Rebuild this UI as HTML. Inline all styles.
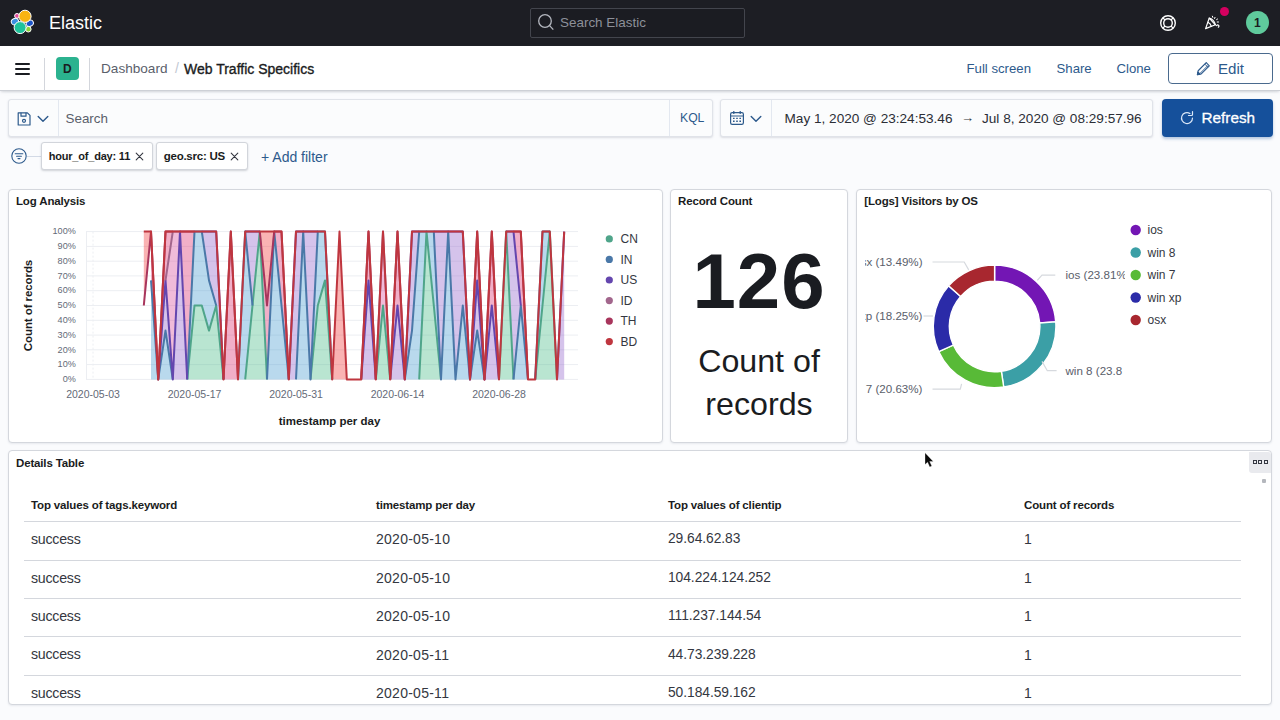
<!DOCTYPE html>
<html lang="en">
<head>
<meta charset="utf-8">
<title>Web Traffic Specifics - Elastic</title>
<style>
*{box-sizing:border-box;margin:0;padding:0}
html,body{width:1280px;height:720px;overflow:hidden;background:#fafbfd;font-family:"Liberation Sans",sans-serif;color:#343741}
.abs{position:absolute}
.t{position:absolute;white-space:nowrap;line-height:1}
#hdr{left:0;top:0;width:1280px;height:46px;background:#1d1e24}
#sub{left:0;top:46px;width:1280px;height:45px;background:#fff;border-bottom:1px solid #cdd0d6;box-shadow:0 2px 2px -1px rgba(130,135,150,.25),0 1px 5px -2px rgba(130,135,150,.25)}
.panel{position:absolute;background:#fff;border:1px solid #d4d7dd;border-radius:4px;box-shadow:0 1px 2px rgba(100,110,130,.12)}
.ptitle{position:absolute;left:7px;top:5.4px;font-size:11.5px;letter-spacing:-.15px;font-weight:700;color:#1a1c21;white-space:nowrap;line-height:12px}
.link{color:#2d5a8c;font-size:13.2px}
.pill{position:absolute;top:142.4px;height:28px;background:#fff;border:1px solid #d2d5db;border-radius:3px;box-shadow:0 1px 2px rgba(110,115,130,.3);font-size:12px;font-weight:700;color:#1a1c21;line-height:25px;padding-left:7px;white-space:nowrap}
.th{position:absolute;top:48px;font-size:11.5px;letter-spacing:-.15px;font-weight:700;color:#1a1c21;white-space:nowrap;line-height:12px}
.td{position:absolute;font-size:14px;color:#343741;white-space:nowrap;line-height:14px}
.row{position:absolute;left:16px;width:1217px;height:1px;background:#d4d7dd}
</style>
</head>
<body>
<!-- top header -->
<div id="hdr" class="abs">
  <svg class="abs" style="left:0;top:0" width="46" height="46" viewBox="0 0 46 46" stroke="#fff" stroke-width="1">
    <circle cx="17" cy="15.9" r="2.4" fill="#e34a9c"/>
    <ellipse cx="14.9" cy="21.6" rx="3.7" ry="3.1" fill="#3b8fe0" transform="rotate(-25 14.9 21.6)"/>
    <ellipse cx="29.8" cy="23.3" rx="3.7" ry="3" fill="#1c55c8" transform="rotate(-25 29.8 23.3)"/>
    <circle cx="28.3" cy="29.2" r="2.8" fill="#8cd138"/>
    <circle cx="25" cy="16.3" r="6.1" fill="#f8b413"/>
    <circle cx="20.1" cy="27.6" r="6" fill="#1fc39a"/>
  </svg>
  <div class="t" style="left:49px;top:14px;font-size:18px;color:#fff">Elastic</div>
  <div class="abs" style="left:530px;top:8px;width:215px;height:30px;border:1px solid #43454d;border-radius:2px;background:#1b1c22"></div>
  <svg class="abs" style="left:536.7px;top:13px" width="18" height="18" viewBox="0 0 18 18" fill="none" stroke="#b4b7bf" stroke-width="1.3"><circle cx="8" cy="8" r="6.3"/><path d="M12.4 12.4 L16.3 16.6"/></svg>
  <div class="t" style="left:560px;top:15.8px;font-size:13.45px;color:#8d9099">Search Elastic</div>
  <!-- help -->
  <svg class="abs" style="left:1159px;top:14px" width="18" height="18" viewBox="0 0 18 18" fill="none" stroke="#fff" stroke-width="1.4"><circle cx="9" cy="9" r="7.3"/><circle cx="9" cy="9" r="4.3"/><path d="M3.9 3.9 L6 6 M14.1 3.9 L12 6 M3.9 14.1 L6 12 M14.1 14.1 L12 12" stroke-width="1.2"/></svg>
  <!-- cheer -->
  <svg class="abs" style="left:1204px;top:14px" width="18" height="18" viewBox="0 0 18 18" fill="none" stroke="#fff" stroke-width="1.2" stroke-linejoin="round" stroke-linecap="round"><path d="M5.2 4.2 L1.6 14.6 L11.4 10.8 Z"/><path d="M5.2 4.2 C8 4.6 10.8 7.6 11.4 10.8"/><path d="M3.9 8.2 C5.6 9 6.9 10.6 7.3 12.3"/><path d="M12.5 11.6 c1.6 -1.6 3.4 .4 1.8 1.6"/><path d="M8.4 2.2 l.4 1.2 M11 3.4 l-.4 1.1 M12.6 5.6 l1 -.6 M13.2 8 l1.3 0" stroke-width="1"/></svg>
  <div class="abs" style="left:1219.5px;top:7px;width:9px;height:9px;border-radius:5px;background:#d4005f"></div>
  <div class="abs" style="left:1246px;top:11px;width:23px;height:23px;border-radius:12px;background:#5fca9c"></div>
  <div class="t" style="left:1254px;top:17px;font-size:12px;font-weight:700;color:#1a1c21">1</div>
</div>

<!-- sub header -->
<div id="sub" class="abs">
  <div class="abs" style="left:15px;top:17px;width:15px;height:2px;background:#1a1c21;border-radius:1px"></div>
  <div class="abs" style="left:15px;top:22px;width:15px;height:2px;background:#1a1c21;border-radius:1px"></div>
  <div class="abs" style="left:15px;top:27px;width:15px;height:2px;background:#1a1c21;border-radius:1px"></div>
  <div class="abs" style="left:44px;top:12px;width:1px;height:33px;background:#d3d6dc"></div>
  <div class="abs" style="left:89px;top:12px;width:1px;height:33px;background:#d3d6dc"></div>
  <div class="abs" style="left:56px;top:11px;width:23px;height:23px;border-radius:4px;background:#2bb28f"></div>
  <div class="t" style="left:63px;top:17px;font-size:12px;font-weight:700;color:#1a1c21">D</div>
  <div class="t" style="left:101px;top:15.5px;font-size:13.6px;color:#5a606b">Dashboard</div>
  <div class="t" style="left:175px;top:15px;font-size:14px;color:#c2c8d3">/</div>
  <div class="t" style="left:184px;top:15.5px;font-size:14px;color:#1a1c21;-webkit-text-stroke:.35px #1a1c21">Web Traffic Specifics</div>
  <div class="t link" style="left:966.5px;top:16px">Full screen</div>
  <div class="t link" style="left:1056.5px;top:16px">Share</div>
  <div class="t link" style="left:1116.5px;top:16px">Clone</div>
  <div class="abs" style="left:1167.5px;top:7.2px;width:105.2px;height:30.4px;border:1px solid #4a6a8e;border-radius:4px;background:#fff"></div>
  <svg class="abs" style="left:1195.5px;top:14.5px" width="15" height="15" viewBox="0 0 16 16" fill="none" stroke="#2d5a8c" stroke-width="1.2" stroke-linejoin="round"><path d="M10.9 1.8 l3.3 3.3 L5.6 13.7 l-4.1 .8 .8 -4.1 Z"/><path d="M9.4 3.3 l3.3 3.3 M3.9 8.8 L10.9 1.8 M4.6 12.9 l8.1 -8.1" stroke-width="1"/><path d="M1.5 14.5 l.55 -2.8 2.25 2.25 Z" fill="#2d5a8c"/></svg>
  <div class="t" style="left:1218px;top:14.5px;font-size:15.1px;color:#2d5a8c">Edit</div>
</div>

<!-- query bar -->
<div class="abs" style="left:8px;top:99px;width:705px;height:38px;background:#fbfcfd;border:1px solid #e0e3e9;border-radius:3px;box-shadow:0 1px 2px rgba(130,135,150,.25)"></div>
<div class="abs" style="left:58px;top:100px;width:1px;height:36px;background:#e3e8f0"></div>
<div class="abs" style="left:669px;top:100px;width:1px;height:36px;background:#e3e8f0"></div>
<svg class="abs" style="left:16px;top:111px" width="16" height="16" viewBox="0 0 16 16" fill="none" stroke="#2d5a8c" stroke-width="1.2" stroke-linejoin="round"><path d="M2.2 1.8 h9.2 l2.6 2.6 v9.6 h-11.8 Z"/><path d="M5 1.8 v3.4 h5 v-3.4"/><circle cx="8" cy="9.8" r="1.5"/></svg>
<svg class="abs" style="left:37px;top:114px" width="12" height="10" viewBox="0 0 12 10" fill="none" stroke="#2d5a8c" stroke-width="1.4" stroke-linecap="round" stroke-linejoin="round"><path d="M1.2 2.4 L6 7.2 L10.8 2.4"/></svg>
<div class="t" style="left:65.5px;top:112px;font-size:13.4px;color:#5a606b">Search</div>
<div class="t link" style="left:680px;top:112px;font-size:12.2px">KQL</div>

<!-- date picker -->
<div class="abs" style="left:720px;top:99px;width:433px;height:38px;background:#fbfcfd;border:1px solid #e0e3e9;border-radius:3px;box-shadow:0 1px 2px rgba(130,135,150,.25)"></div>
<div class="abs" style="left:771px;top:100px;width:1px;height:36px;background:#e3e8f0"></div>
<svg class="abs" style="left:729px;top:110px" width="16" height="16" viewBox="0 0 16 16" fill="none" stroke="#2d5a8c" stroke-width="1.2"><rect x="1.6" y="2.6" width="12.8" height="11.8" rx="1.6"/><path d="M1.6 6 h12.8 M4.8 1 v3 M11.2 1 v3"/><path d="M4 8.4 h1.6 M7.2 8.4 h1.6 M10.4 8.4 h1.6 M4 11.2 h1.6 M7.2 11.2 h1.6 M10.4 11.2 h1.6" stroke-width="1.4"/></svg>
<svg class="abs" style="left:750px;top:114px" width="12" height="10" viewBox="0 0 12 10" fill="none" stroke="#2d5a8c" stroke-width="1.4" stroke-linecap="round" stroke-linejoin="round"><path d="M1.2 2.4 L6 7.2 L10.8 2.4"/></svg>
<div class="t" style="left:784.5px;top:111.5px;font-size:13.6px;color:#2b2e36">May 1, 2020 @ 23:24:53.46</div>
<div class="t" style="left:961px;top:111px;font-size:13px;color:#343741">→</div>
<div class="t" style="left:982px;top:111.5px;font-size:13.6px;color:#2b2e36">Jul 8, 2020 @ 08:29:57.96</div>

<!-- refresh -->
<div class="abs" style="left:1162px;top:99px;width:111px;height:38px;background:#15509b;border-radius:4px;box-shadow:0 2px 3px rgba(21,80,155,.3)"></div>
<svg class="abs" style="left:1179px;top:110px" width="16" height="16" viewBox="0 0 16 16" fill="none" stroke="#dbe7f7" stroke-width="1.2" stroke-linecap="round" stroke-linejoin="round"><path d="M10.9 3.4 A5.5 5.5 0 1 0 13.5 8"/><path d="M13.5 1.5 V4.5 Q13.5 5.5 12.5 5.5 H9.5"/></svg>
<div class="t" style="left:1201.5px;top:110px;font-size:15.3px;color:#fff;-webkit-text-stroke:.3px #fff">Refresh</div>

<!-- filter row -->
<svg class="abs" style="left:10.5px;top:147.5px" width="16" height="16" viewBox="0 0 16 16" fill="none" stroke="#2d5a8c" stroke-width="1.1" stroke-linecap="round"><circle cx="8" cy="8" r="7.2"/><path d="M4.2 5.8 h7.6 M5.6 8.2 h4.8 M7 10.6 h2"/></svg>
<div class="abs" style="left:27px;top:156px;width:14px;height:1px;background:#d3dae6"></div>
<div class="pill" style="left:41px;width:112px"></div>
<div class="t" id="pt1" style="left:48.7px;top:151.3px;font-size:11px;letter-spacing:-.2px;font-weight:700;color:#1a1c21">hour_of_day: 11</div>
<svg class="abs" style="left:135px;top:151.8px" width="9" height="9" viewBox="0 0 9 9" stroke="#343741" stroke-width="1.1" stroke-linecap="round"><path d="M1.2 1.2 L7.8 7.8 M7.8 1.2 L1.2 7.8"/></svg>
<div class="pill" style="left:156px;width:92px"></div>
<div class="t" id="pt2" style="left:163.7px;top:151px;font-size:11.5px;letter-spacing:-.24px;font-weight:700;color:#1a1c21">geo.src: US</div>
<svg class="abs" style="left:230px;top:151.8px" width="9" height="9" viewBox="0 0 9 9" stroke="#343741" stroke-width="1.1" stroke-linecap="round"><path d="M1.2 1.2 L7.8 7.8 M7.8 1.2 L1.2 7.8"/></svg>
<div class="t link" style="left:261px;top:149.5px;font-size:14px">+ Add filter</div>

<!-- PANELS -->
<div class="panel" id="p1" style="left:8px;top:188.6px;width:654.7px;height:254.4px"><div class="ptitle">Log Analysis</div></div>
<svg class="abs" style="left:0;top:0" width="670" height="450" viewBox="0 0 670 450" font-family="Liberation Sans, sans-serif">
<line x1="86" x2="578" y1="379.4" y2="379.4" stroke="#eceef2" stroke-width="1"/>
<text x="75.8" y="382.1" font-size="9.1" fill="#646a77" text-anchor="end">0%</text>
<line x1="86" x2="578" y1="364.6" y2="364.6" stroke="#eceef2" stroke-width="1"/>
<text x="75.8" y="367.3" font-size="9.1" fill="#646a77" text-anchor="end">10%</text>
<line x1="86" x2="578" y1="349.8" y2="349.8" stroke="#eceef2" stroke-width="1"/>
<text x="75.8" y="352.5" font-size="9.1" fill="#646a77" text-anchor="end">20%</text>
<line x1="86" x2="578" y1="335.1" y2="335.1" stroke="#eceef2" stroke-width="1"/>
<text x="75.8" y="337.8" font-size="9.1" fill="#646a77" text-anchor="end">30%</text>
<line x1="86" x2="578" y1="320.3" y2="320.3" stroke="#eceef2" stroke-width="1"/>
<text x="75.8" y="323.0" font-size="9.1" fill="#646a77" text-anchor="end">40%</text>
<line x1="86" x2="578" y1="305.5" y2="305.5" stroke="#eceef2" stroke-width="1"/>
<text x="75.8" y="308.2" font-size="9.1" fill="#646a77" text-anchor="end">50%</text>
<line x1="86" x2="578" y1="290.7" y2="290.7" stroke="#eceef2" stroke-width="1"/>
<text x="75.8" y="293.4" font-size="9.1" fill="#646a77" text-anchor="end">60%</text>
<line x1="86" x2="578" y1="275.9" y2="275.9" stroke="#eceef2" stroke-width="1"/>
<text x="75.8" y="278.6" font-size="9.1" fill="#646a77" text-anchor="end">70%</text>
<line x1="86" x2="578" y1="261.2" y2="261.2" stroke="#eceef2" stroke-width="1"/>
<text x="75.8" y="263.9" font-size="9.1" fill="#646a77" text-anchor="end">80%</text>
<line x1="86" x2="578" y1="246.4" y2="246.4" stroke="#eceef2" stroke-width="1"/>
<text x="75.8" y="249.1" font-size="9.1" fill="#646a77" text-anchor="end">90%</text>
<line x1="86" x2="578" y1="231.6" y2="231.6" stroke="#eceef2" stroke-width="1"/>
<text x="75.8" y="234.3" font-size="9.1" fill="#646a77" text-anchor="end">100%</text>
<line x1="86.5" x2="86.5" y1="231.6" y2="379.4" stroke="#eceef2" stroke-width="1"/>
<line x1="93.0" x2="93.0" y1="231.6" y2="379.4" stroke="#eceef2" stroke-width="1" stroke-dasharray="2 2"/>
<text x="93.0" y="398.1" font-size="10.5" fill="#646a77" text-anchor="middle">2020-05-03</text>
<text x="194.5" y="398.1" font-size="10.5" fill="#646a77" text-anchor="middle">2020-05-17</text>
<text x="296.0" y="398.1" font-size="10.5" fill="#646a77" text-anchor="middle">2020-05-31</text>
<text x="397.5" y="398.1" font-size="10.5" fill="#646a77" text-anchor="middle">2020-06-14</text>
<text x="499.0" y="398.1" font-size="10.5" fill="#646a77" text-anchor="middle">2020-06-28</text>
<polygon points="187.2,379.4 194.5,305.5 201.8,305.5 209.0,330.6 216.2,305.5 223.5,379.4 230.8,379.4 238.0,379.4 245.2,379.4 252.5,305.5 259.8,231.6 267.0,379.4 274.2,379.4 281.5,379.4 288.8,379.4 296.0,379.4 303.2,379.4 310.5,379.4 317.8,305.5 325.0,280.4 332.2,379.4 339.5,379.4 346.8,379.4 354.0,379.4 361.2,379.4 368.5,379.4 375.8,379.4 383.0,305.5 390.2,379.4 397.5,379.4 404.8,379.4 412.0,379.4 419.2,379.4 426.5,231.6 433.8,305.5 441.0,379.4 448.2,379.4 455.5,379.4 462.8,379.4 470.0,379.4 477.2,379.4 484.5,379.4 491.8,379.4 499.0,379.4 506.2,231.6 513.5,379.4 520.8,379.4 528.0,379.4 535.2,379.4 542.5,305.5 549.8,231.6 557.0,379.4 564.2,379.4 564.2,379.4 557.0,379.4 549.8,379.4 542.5,379.4 535.2,379.4 528.0,379.4 520.8,379.4 513.5,379.4 506.2,379.4 499.0,379.4 491.8,379.4 484.5,379.4 477.2,379.4 470.0,379.4 462.8,379.4 455.5,379.4 448.2,379.4 441.0,379.4 433.8,379.4 426.5,379.4 419.2,379.4 412.0,379.4 404.8,379.4 397.5,379.4 390.2,379.4 383.0,379.4 375.8,379.4 368.5,379.4 361.2,379.4 354.0,379.4 346.8,379.4 339.5,379.4 332.2,379.4 325.0,379.4 317.8,379.4 310.5,379.4 303.2,379.4 296.0,379.4 288.8,379.4 281.5,379.4 274.2,379.4 267.0,379.4 259.8,379.4 252.5,379.4 245.2,379.4 238.0,379.4 230.8,379.4 223.5,379.4 216.2,379.4 209.0,379.4 201.8,379.4 194.5,379.4 187.2,379.4" fill="rgb(80,190,140)" fill-opacity="0.4"/>
<polygon points="151.0,280.4 158.2,379.4 165.5,330.6 172.8,379.4 180.0,379.4 187.2,379.4 194.5,231.6 201.8,231.6 209.0,280.4 216.2,305.5 223.5,379.4 230.8,379.4 238.0,379.4 245.2,231.6 252.5,305.5 259.8,231.6 267.0,379.4 274.2,231.6 281.5,305.5 288.8,379.4 296.0,379.4 303.2,231.6 310.5,379.4 317.8,231.6 325.0,231.6 332.2,379.4 339.5,379.4 346.8,379.4 354.0,379.4 361.2,379.4 368.5,379.4 375.8,379.4 383.0,305.5 390.2,379.4 397.5,379.4 404.8,379.4 412.0,330.6 419.2,231.6 426.5,231.6 433.8,231.6 441.0,379.4 448.2,231.6 455.5,379.4 462.8,305.5 470.0,379.4 477.2,330.6 484.5,379.4 491.8,379.4 499.0,379.4 506.2,231.6 513.5,379.4 520.8,305.5 528.0,379.4 535.2,379.4 542.5,231.6 549.8,231.6 557.0,379.4 564.2,379.4 564.2,379.4 557.0,379.4 549.8,231.6 542.5,305.5 535.2,379.4 528.0,379.4 520.8,379.4 513.5,379.4 506.2,231.6 499.0,379.4 491.8,379.4 484.5,379.4 477.2,379.4 470.0,379.4 462.8,379.4 455.5,379.4 448.2,379.4 441.0,379.4 433.8,305.5 426.5,231.6 419.2,379.4 412.0,379.4 404.8,379.4 397.5,379.4 390.2,379.4 383.0,305.5 375.8,379.4 368.5,379.4 361.2,379.4 354.0,379.4 346.8,379.4 339.5,379.4 332.2,379.4 325.0,280.4 317.8,305.5 310.5,379.4 303.2,379.4 296.0,379.4 288.8,379.4 281.5,379.4 274.2,379.4 267.0,379.4 259.8,231.6 252.5,305.5 245.2,379.4 238.0,379.4 230.8,379.4 223.5,379.4 216.2,305.5 209.0,330.6 201.8,305.5 194.5,305.5 187.2,379.4 180.0,379.4 172.8,379.4 165.5,379.4 158.2,379.4 151.0,379.4" fill="rgb(80,160,210)" fill-opacity="0.4"/>
<polygon points="158.2,379.4 165.5,280.4 172.8,379.4 180.0,231.6 187.2,379.4 194.5,231.6 201.8,231.6 209.0,231.6 216.2,231.6 223.5,379.4 230.8,379.4 238.0,379.4 245.2,231.6 252.5,231.6 259.8,231.6 267.0,379.4 274.2,231.6 281.5,305.5 288.8,379.4 296.0,231.6 303.2,231.6 310.5,231.6 317.8,231.6 325.0,231.6 332.2,379.4 339.5,379.4 346.8,379.4 354.0,379.4 361.2,379.4 368.5,280.4 375.8,379.4 383.0,305.5 390.2,379.4 397.5,305.5 404.8,379.4 412.0,231.6 419.2,231.6 426.5,231.6 433.8,231.6 441.0,231.6 448.2,231.6 455.5,231.6 462.8,231.6 470.0,379.4 477.2,280.4 484.5,379.4 491.8,305.5 499.0,379.4 506.2,231.6 513.5,231.6 520.8,305.5 528.0,379.4 535.2,379.4 542.5,231.6 549.8,231.6 557.0,379.4 564.2,231.6 564.2,379.4 557.0,379.4 549.8,231.6 542.5,231.6 535.2,379.4 528.0,379.4 520.8,305.5 513.5,379.4 506.2,231.6 499.0,379.4 491.8,379.4 484.5,379.4 477.2,330.6 470.0,379.4 462.8,305.5 455.5,379.4 448.2,231.6 441.0,379.4 433.8,231.6 426.5,231.6 419.2,231.6 412.0,330.6 404.8,379.4 397.5,379.4 390.2,379.4 383.0,305.5 375.8,379.4 368.5,379.4 361.2,379.4 354.0,379.4 346.8,379.4 339.5,379.4 332.2,379.4 325.0,231.6 317.8,231.6 310.5,379.4 303.2,231.6 296.0,379.4 288.8,379.4 281.5,305.5 274.2,231.6 267.0,379.4 259.8,231.6 252.5,305.5 245.2,231.6 238.0,379.4 230.8,379.4 223.5,379.4 216.2,305.5 209.0,280.4 201.8,231.6 194.5,231.6 187.2,379.4 180.0,379.4 172.8,379.4 165.5,330.6 158.2,379.4" fill="rgb(150,105,205)" fill-opacity="0.4"/>
<polygon points="165.5,280.4 172.8,231.6 180.0,231.6 187.2,379.4 194.5,231.6 201.8,231.6 209.0,231.6 216.2,231.6 223.5,379.4 230.8,379.4 238.0,379.4 245.2,231.6 252.5,231.6 259.8,231.6 267.0,379.4 274.2,231.6 281.5,305.5 288.8,379.4 296.0,231.6 303.2,231.6 310.5,231.6 317.8,231.6 325.0,231.6 332.2,379.4 339.5,379.4 346.8,379.4 354.0,379.4 361.2,379.4 368.5,280.4 375.8,379.4 383.0,231.6 390.2,379.4 397.5,305.5 404.8,379.4 412.0,231.6 419.2,231.6 426.5,231.6 433.8,231.6 441.0,231.6 448.2,231.6 455.5,231.6 462.8,231.6 470.0,379.4 477.2,280.4 484.5,379.4 491.8,305.5 499.0,379.4 506.2,231.6 513.5,231.6 520.8,305.5 528.0,379.4 535.2,379.4 542.5,231.6 549.8,231.6 557.0,379.4 564.2,231.6 564.2,231.6 557.0,379.4 549.8,231.6 542.5,231.6 535.2,379.4 528.0,379.4 520.8,305.5 513.5,231.6 506.2,231.6 499.0,379.4 491.8,305.5 484.5,379.4 477.2,280.4 470.0,379.4 462.8,231.6 455.5,231.6 448.2,231.6 441.0,231.6 433.8,231.6 426.5,231.6 419.2,231.6 412.0,231.6 404.8,379.4 397.5,305.5 390.2,379.4 383.0,305.5 375.8,379.4 368.5,280.4 361.2,379.4 354.0,379.4 346.8,379.4 339.5,379.4 332.2,379.4 325.0,231.6 317.8,231.6 310.5,231.6 303.2,231.6 296.0,231.6 288.8,379.4 281.5,305.5 274.2,231.6 267.0,379.4 259.8,231.6 252.5,231.6 245.2,231.6 238.0,379.4 230.8,379.4 223.5,379.4 216.2,231.6 209.0,231.6 201.8,231.6 194.5,231.6 187.2,379.4 180.0,231.6 172.8,379.4 165.5,280.4" fill="rgb(218,85,160)" fill-opacity="0.4"/>
<polygon points="151.0,231.6 158.2,379.4 165.5,231.6 172.8,231.6 180.0,231.6 187.2,231.6 194.5,231.6 201.8,231.6 209.0,231.6 216.2,231.6 223.5,379.4 230.8,231.6 238.0,379.4 245.2,231.6 252.5,231.6 259.8,231.6 267.0,305.5 274.2,231.6 281.5,231.6 288.8,379.4 296.0,231.6 303.2,231.6 310.5,231.6 317.8,231.6 325.0,231.6 332.2,379.4 339.5,379.4 346.8,379.4 354.0,379.4 361.2,379.4 368.5,231.6 375.8,379.4 383.0,231.6 390.2,379.4 397.5,231.6 404.8,379.4 412.0,231.6 419.2,231.6 426.5,231.6 433.8,231.6 441.0,231.6 448.2,231.6 455.5,231.6 462.8,231.6 470.0,379.4 477.2,231.6 484.5,379.4 491.8,231.6 499.0,379.4 506.2,231.6 513.5,231.6 520.8,231.6 528.0,379.4 535.2,379.4 542.5,231.6 549.8,231.6 557.0,379.4 564.2,231.6 564.2,231.6 557.0,379.4 549.8,231.6 542.5,231.6 535.2,379.4 528.0,379.4 520.8,305.5 513.5,231.6 506.2,231.6 499.0,379.4 491.8,305.5 484.5,379.4 477.2,280.4 470.0,379.4 462.8,231.6 455.5,231.6 448.2,231.6 441.0,231.6 433.8,231.6 426.5,231.6 419.2,231.6 412.0,231.6 404.8,379.4 397.5,305.5 390.2,379.4 383.0,231.6 375.8,379.4 368.5,280.4 361.2,379.4 354.0,379.4 346.8,379.4 339.5,379.4 332.2,379.4 325.0,231.6 317.8,231.6 310.5,231.6 303.2,231.6 296.0,231.6 288.8,379.4 281.5,305.5 274.2,231.6 267.0,379.4 259.8,231.6 252.5,231.6 245.2,231.6 238.0,379.4 230.8,379.4 223.5,379.4 216.2,231.6 209.0,231.6 201.8,231.6 194.5,231.6 187.2,379.4 180.0,231.6 172.8,231.6 165.5,280.4 158.2,379.4 151.0,280.4" fill="rgb(220,55,118)" fill-opacity="0.4"/>
<polygon points="143.8,231.6 151.0,231.6 158.2,379.4 165.5,231.6 172.8,231.6 180.0,231.6 187.2,231.6 194.5,231.6 201.8,231.6 209.0,231.6 216.2,231.6 223.5,379.4 230.8,231.6 238.0,379.4 245.2,231.6 252.5,231.6 259.8,231.6 267.0,231.6 274.2,231.6 281.5,231.6 288.8,379.4 296.0,231.6 303.2,231.6 310.5,231.6 317.8,231.6 325.0,231.6 332.2,379.4 339.5,231.6 346.8,379.4 354.0,379.4 361.2,379.4 368.5,231.6 375.8,379.4 383.0,231.6 390.2,379.4 397.5,231.6 404.8,379.4 412.0,231.6 419.2,231.6 426.5,231.6 433.8,231.6 441.0,231.6 448.2,231.6 455.5,231.6 462.8,231.6 470.0,379.4 477.2,231.6 484.5,379.4 491.8,231.6 499.0,379.4 506.2,231.6 513.5,231.6 520.8,231.6 528.0,379.4 535.2,379.4 542.5,231.6 549.8,231.6 557.0,379.4 564.2,231.6 564.2,231.6 557.0,379.4 549.8,231.6 542.5,231.6 535.2,379.4 528.0,379.4 520.8,231.6 513.5,231.6 506.2,231.6 499.0,379.4 491.8,231.6 484.5,379.4 477.2,231.6 470.0,379.4 462.8,231.6 455.5,231.6 448.2,231.6 441.0,231.6 433.8,231.6 426.5,231.6 419.2,231.6 412.0,231.6 404.8,379.4 397.5,231.6 390.2,379.4 383.0,231.6 375.8,379.4 368.5,231.6 361.2,379.4 354.0,379.4 346.8,379.4 339.5,379.4 332.2,379.4 325.0,231.6 317.8,231.6 310.5,231.6 303.2,231.6 296.0,231.6 288.8,379.4 281.5,231.6 274.2,231.6 267.0,305.5 259.8,231.6 252.5,231.6 245.2,231.6 238.0,379.4 230.8,231.6 223.5,379.4 216.2,231.6 209.0,231.6 201.8,231.6 194.5,231.6 187.2,231.6 180.0,231.6 172.8,231.6 165.5,231.6 158.2,379.4 151.0,231.6 143.8,305.5" fill="rgb(242,66,66)" fill-opacity="0.4"/>
<path d="M187.2 379.4 L194.5 305.5 L201.8 305.5 L209.0 330.6 L216.2 305.5 L223.5 379.4 M245.2 379.4 L252.5 305.5 L259.8 231.6 L267.0 379.4 M310.5 379.4 L317.8 305.5 L325.0 280.4 L332.2 379.4 M375.8 379.4 L383.0 305.5 L390.2 379.4 M419.2 379.4 L426.5 231.6 L433.8 305.5 L441.0 379.4 M499.0 379.4 L506.2 231.6 L513.5 379.4 M535.2 379.4 L542.5 305.5 L549.8 231.6 L557.0 379.4" fill="none" stroke="#4fa58a" stroke-width="2" stroke-linejoin="round"/>
<path d="M151.0 280.4 L158.2 379.4 L165.5 330.6 L172.8 379.4 M187.2 379.4 L194.5 231.6 L201.8 231.6 L209.0 280.4 L216.2 305.5 M238.0 379.4 L245.2 231.6 L252.5 305.5 M267.0 379.4 L274.2 231.6 L281.5 305.5 L288.8 379.4 M296.0 379.4 L303.2 231.6 L310.5 379.4 L317.8 231.6 L325.0 231.6 L332.2 379.4 M404.8 379.4 L412.0 330.6 L419.2 231.6 L426.5 231.6 L433.8 231.6 L441.0 379.4 L448.2 231.6 L455.5 379.4 L462.8 305.5 L470.0 379.4 L477.2 330.6 L484.5 379.4 M513.5 379.4 L520.8 305.5 L528.0 379.4 M535.2 379.4 L542.5 231.6 L549.8 231.6" fill="none" stroke="#4a78a8" stroke-width="2" stroke-linejoin="round"/>
<path d="M158.2 379.4 L165.5 280.4 L172.8 379.4 L180.0 231.6 L187.2 379.4 M201.8 231.6 L209.0 231.6 L216.2 231.6 L223.5 379.4 M245.2 231.6 L252.5 231.6 L259.8 231.6 M288.8 379.4 L296.0 231.6 L303.2 231.6 L310.5 231.6 L317.8 231.6 M361.2 379.4 L368.5 280.4 L375.8 379.4 M390.2 379.4 L397.5 305.5 L404.8 379.4 L412.0 231.6 L419.2 231.6 M433.8 231.6 L441.0 231.6 L448.2 231.6 L455.5 231.6 L462.8 231.6 L470.0 379.4 L477.2 280.4 L484.5 379.4 L491.8 305.5 L499.0 379.4 M506.2 231.6 L513.5 231.6 L520.8 305.5 M557.0 379.4 L564.2 231.6" fill="none" stroke="#6446ae" stroke-width="2" stroke-linejoin="round"/>
<path d="M165.5 280.4 L172.8 231.6 L180.0 231.6 M375.8 379.4 L383.0 231.6 L390.2 379.4" fill="none" stroke="#a2668c" stroke-width="2" stroke-linejoin="round"/>
<path d="M143.8 305.5 L151.0 231.6 L158.2 379.4 L165.5 231.6 L172.8 231.6 M180.0 231.6 L187.2 231.6 L194.5 231.6 M223.5 379.4 L230.8 231.6 L238.0 379.4 M259.8 231.6 L267.0 305.5 L274.2 231.6 L281.5 231.6 L288.8 379.4 M361.2 379.4 L368.5 231.6 L375.8 379.4 M390.2 379.4 L397.5 231.6 L404.8 379.4 M470.0 379.4 L477.2 231.6 L484.5 379.4 L491.8 231.6 L499.0 379.4 M513.5 231.6 L520.8 231.6 L528.0 379.4" fill="none" stroke="#a8355c" stroke-width="2" stroke-linejoin="round"/>
<path d="M143.8 231.6 L151.0 231.6 L158.2 379.4 L165.5 231.6 L172.8 231.6 L180.0 231.6 L187.2 231.6 L194.5 231.6 L201.8 231.6 L209.0 231.6 L216.2 231.6 L223.5 379.4 L230.8 231.6 L238.0 379.4 L245.2 231.6 L252.5 231.6 L259.8 231.6 L267.0 231.6 L274.2 231.6 L281.5 231.6 L288.8 379.4 L296.0 231.6 L303.2 231.6 L310.5 231.6 L317.8 231.6 L325.0 231.6 L332.2 379.4 L339.5 231.6 L346.8 379.4 L354.0 379.4 L361.2 379.4 L368.5 231.6 L375.8 379.4 L383.0 231.6 L390.2 379.4 L397.5 231.6 L404.8 379.4 L412.0 231.6 L419.2 231.6 L426.5 231.6 L433.8 231.6 L441.0 231.6 L448.2 231.6 L455.5 231.6 L462.8 231.6 L470.0 379.4 L477.2 231.6 L484.5 379.4 L491.8 231.6 L499.0 379.4 L506.2 231.6 L513.5 231.6 L520.8 231.6 L528.0 379.4 L535.2 379.4 L542.5 231.6 L549.8 231.6 L557.0 379.4 L564.2 231.6" fill="none" stroke="#bf363f" stroke-width="2" stroke-linejoin="round"/>
<text transform="translate(32,305.5) rotate(-90)" font-size="11.5" font-weight="700" fill="#1a1c21" text-anchor="middle" letter-spacing="-.08">Count of records</text>
<text x="329.5" y="424.5" font-size="11.5" font-weight="700" fill="#1a1c21" text-anchor="middle">timestamp per day</text>
<circle cx="609.3" cy="238.9" r="3.6" fill="#4fa58a"/>
<text x="620.5" y="243.1" font-size="12" fill="#343741">CN</text>
<circle cx="609.3" cy="259.4" r="3.6" fill="#4a78a8"/>
<text x="620.5" y="263.6" font-size="12" fill="#343741">IN</text>
<circle cx="609.3" cy="280.0" r="3.6" fill="#6446ae"/>
<text x="620.5" y="284.2" font-size="12" fill="#343741">US</text>
<circle cx="609.3" cy="300.6" r="3.6" fill="#a2668c"/>
<text x="620.5" y="304.8" font-size="12" fill="#343741">ID</text>
<circle cx="609.3" cy="321.1" r="3.6" fill="#a8355c"/>
<text x="620.5" y="325.3" font-size="12" fill="#343741">TH</text>
<circle cx="609.3" cy="341.6" r="3.6" fill="#bf363f"/>
<text x="620.5" y="345.8" font-size="12" fill="#343741">BD</text>
</svg>
<div class="panel" id="p2" style="left:670px;top:188.6px;width:178px;height:254.4px"><div class="ptitle">Record Count</div></div>
<div class="t" style="left:670px;top:242px;width:178px;text-align:center;font-size:78px;font-weight:700;color:#1a1c21;letter-spacing:1px">126</div>
<div class="t" style="left:670px;top:345px;width:178px;text-align:center;font-size:32.2px;color:#1a1c21">Count of</div>
<div class="t" style="left:670px;top:387.6px;width:178px;text-align:center;font-size:32.2px;color:#1a1c21">records</div>
<div class="panel" id="p3" style="left:856.3px;top:188.6px;width:416px;height:254.4px"><div class="ptitle">[Logs] Visitors by OS</div></div>
<svg class="abs" style="left:856px;top:189px" width="416" height="254" viewBox="856 189 416 254" font-family="Liberation Sans, sans-serif">
<path d="M994.60 265.10 A61.3 61.3 0 0 1 1055.73 321.83 L1039.77 323.02 A45.3 45.3 0 0 0 994.60 281.10 Z" fill="#7316b4" stroke="#fff" stroke-width="1.4"/>
<path d="M1055.73 321.83 A61.3 61.3 0 0 1 1003.71 387.02 L1001.34 371.20 A45.3 45.3 0 0 0 1039.77 323.02 Z" fill="#3b9fa6" stroke="#fff" stroke-width="1.4"/>
<path d="M1003.71 387.02 A61.3 61.3 0 0 1 938.72 351.60 L953.31 345.02 A45.3 45.3 0 0 0 1001.34 371.20 Z" fill="#58ba37" stroke="#fff" stroke-width="1.4"/>
<path d="M938.72 351.60 A61.3 61.3 0 0 1 948.64 285.84 L960.64 296.42 A45.3 45.3 0 0 0 953.31 345.02 Z" fill="#2b2ba8" stroke="#fff" stroke-width="1.4"/>
<path d="M948.64 285.84 A61.3 61.3 0 0 1 994.60 265.10 L994.60 281.10 A45.3 45.3 0 0 0 960.64 296.42 Z" fill="#a8272f" stroke="#fff" stroke-width="1.4"/>
<polyline points="932.5,262 964.2,262 968.7,269.9" stroke="#d6d9de" stroke-width="1.2" fill="none"/>
<polyline points="1037.3,280.4 1042,275.2 1055.3,275.2" stroke="#d6d9de" stroke-width="1.2" fill="none"/>
<polyline points="1042,361.4 1047.3,370.7 1056.6,370.7" stroke="#d6d9de" stroke-width="1.2" fill="none"/>
<polyline points="932.5,389.1 960.3,389.1 961.6,383.9" stroke="#d6d9de" stroke-width="1.2" fill="none"/>
<polyline points="923.5,316 933,316" stroke="#d6d9de" stroke-width="1.2" fill="none"/>
<clipPath id="dc"><rect x="865" y="220" width="260" height="200"/></clipPath>
<g clip-path="url(#dc)"><text x="922.5" y="266" text-anchor="end" font-size="11.6" fill="#5a606b">osx (13.49%)</text>
<text x="922.5" y="320" text-anchor="end" font-size="11.6" fill="#5a606b">win xp (18.25%)</text>
<text x="922.5" y="393" text-anchor="end" font-size="11.6" fill="#5a606b">win 7 (20.63%)</text>
<text x="1065.5" y="279" font-size="11.6" fill="#5a606b">ios (23.81%)</text>
<text x="1065.5" y="375" font-size="11.6" fill="#5a606b">win 8 (23.8</text></g>
<circle cx="1135.7" cy="230.0" r="5.2" fill="#7316b4"/>
<text x="1147.5" y="234.2" font-size="12" fill="#343741">ios</text>
<circle cx="1135.7" cy="252.5" r="5.2" fill="#3b9fa6"/>
<text x="1147.5" y="256.7" font-size="12" fill="#343741">win 8</text>
<circle cx="1135.7" cy="275.0" r="5.2" fill="#58ba37"/>
<text x="1147.5" y="279.2" font-size="12" fill="#343741">win 7</text>
<circle cx="1135.7" cy="297.5" r="5.2" fill="#2b2ba8"/>
<text x="1147.5" y="301.7" font-size="12" fill="#343741">win xp</text>
<circle cx="1135.7" cy="320.0" r="5.2" fill="#a8272f"/>
<text x="1147.5" y="324.2" font-size="12" fill="#343741">osx</text>
</svg>
<div class="panel" id="p4" style="left:8px;top:450.4px;width:1264.3px;height:254.6px"><div class="ptitle">Details Table</div></div>
<div class="th" style="left:31px;top:499.1px">Top values of tags.keyword</div>
<div class="th" style="left:376px;top:499.1px">timestamp per day</div>
<div class="th" style="left:668px;top:499.1px">Top values of clientip</div>
<div class="th" style="left:1024px;top:499.1px">Count of records</div>
<div class="abs" style="left:9px;top:452px;width:1262px;height:252px;overflow:hidden">
<div class="row" style="left:15px;top:69.0px"></div>
<div class="td" style="left:22px;top:80.4px;font-size:14.2px;letter-spacing:-.25px;margin-top:-.4px">success</div>
<div class="td" style="left:367px;top:80.4px;letter-spacing:.26px">2020-05-10</div>
<div class="td" style="left:659px;top:80.4px;font-size:13.8px;letter-spacing:-.05px">29.64.62.83</div>
<div class="td" style="left:1015px;top:80.4px;">1</div>
<div class="row" style="left:15px;top:107.5px"></div>
<div class="td" style="left:22px;top:118.9px;font-size:14.2px;letter-spacing:-.25px;margin-top:-.4px">success</div>
<div class="td" style="left:367px;top:118.9px;letter-spacing:.26px">2020-05-10</div>
<div class="td" style="left:659px;top:118.9px;font-size:13.8px;letter-spacing:-.05px">104.224.124.252</div>
<div class="td" style="left:1015px;top:118.9px;">1</div>
<div class="row" style="left:15px;top:145.9px"></div>
<div class="td" style="left:22px;top:157.3px;font-size:14.2px;letter-spacing:-.25px;margin-top:-.4px">success</div>
<div class="td" style="left:367px;top:157.3px;letter-spacing:.26px">2020-05-10</div>
<div class="td" style="left:659px;top:157.3px;font-size:13.8px;letter-spacing:-.05px">111.237.144.54</div>
<div class="td" style="left:1015px;top:157.3px;">1</div>
<div class="row" style="left:15px;top:184.4px"></div>
<div class="td" style="left:22px;top:195.8px;font-size:14.2px;letter-spacing:-.25px;margin-top:-.4px">success</div>
<div class="td" style="left:367px;top:195.8px;letter-spacing:.26px">2020-05-11</div>
<div class="td" style="left:659px;top:195.8px;font-size:13.8px;letter-spacing:-.05px">44.73.239.228</div>
<div class="td" style="left:1015px;top:195.8px;">1</div>
<div class="row" style="left:15px;top:222.8px"></div>
<div class="td" style="left:22px;top:234.2px;font-size:14.2px;letter-spacing:-.25px;margin-top:-.4px">success</div>
<div class="td" style="left:367px;top:234.2px;letter-spacing:.26px">2020-05-11</div>
<div class="td" style="left:659px;top:234.2px;font-size:13.8px;letter-spacing:-.05px">50.184.59.162</div>
<div class="td" style="left:1015px;top:234.2px;">1</div>
</div>
<div class="abs" style="left:1249px;top:452px;width:22px;height:21px;background:#e9eaee;border-radius:0 3px 0 3px"></div>
<div class="abs" style="left:1253.0px;top:460px;width:4px;height:4px;border:1px solid #343741"></div>
<div class="abs" style="left:1258.3px;top:460px;width:4px;height:4px;border:1px solid #343741"></div>
<div class="abs" style="left:1263.6px;top:460px;width:4px;height:4px;border:1px solid #343741"></div>
<div class="abs" style="left:1262px;top:479px;width:4px;height:4px;background:#b4b7bd;border-radius:1px"></div>
<svg class="abs" style="left:920px;top:448px" width="20" height="24" viewBox="-5 -5 20 24"><path d="M0 -0.2 L0 11.6 L2.6 9.2 L4.7 14 L6.8 13.1 L4.7 8.5 L8.3 8.5 Z" fill="#0a0a0a" stroke="#fff" stroke-opacity=".6" stroke-width=".5" stroke-linejoin="round"/></svg>

</body>
</html>
